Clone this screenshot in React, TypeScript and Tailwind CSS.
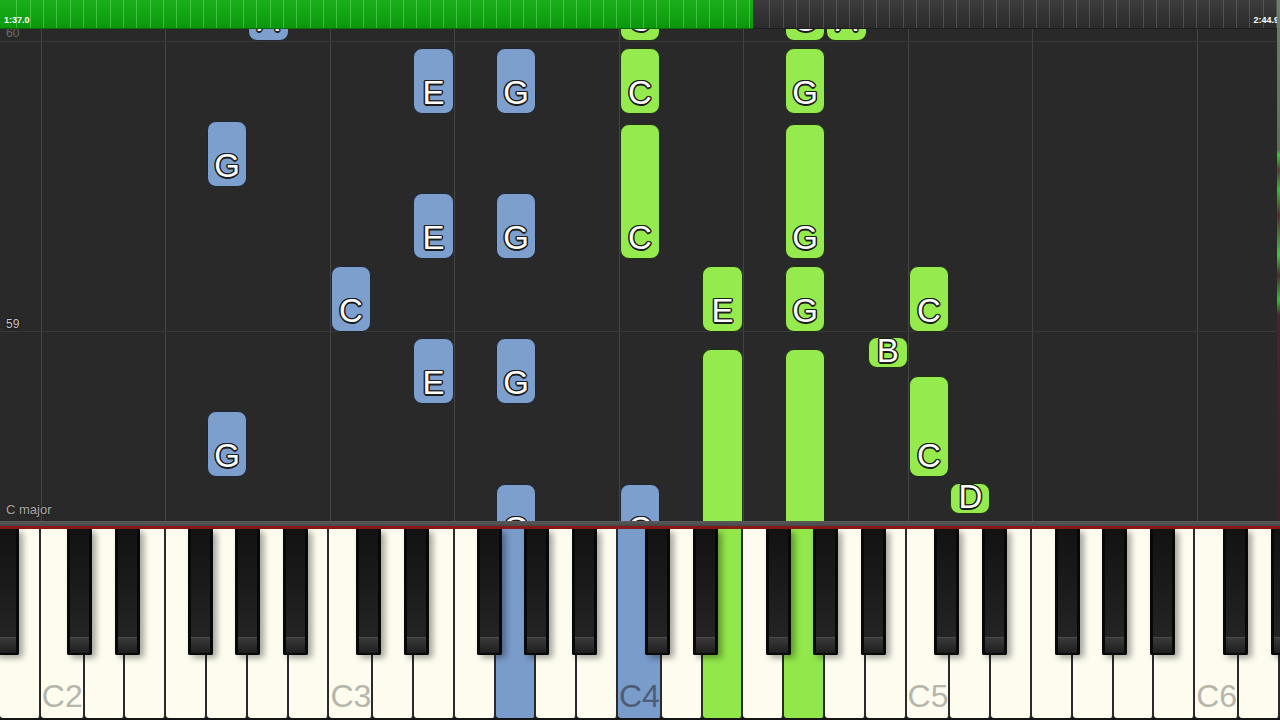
import React from 'react';

const W = 1280 / 31;
const ROLL_TOP = 29;
const NAMES = ['B', 'C', 'D', 'E', 'F', 'G', 'A'];

interface Note {
  i: number;
  top: number;
  bottom: number;
  c: 'b' | 'g';
  pb?: number;
}

// page y coordinates; i = white key index starting at B1
const notes: Note[] = [
  { i: 6, top: -25, bottom: 41, c: 'b' },
  { i: 10, top: 48, bottom: 114, c: 'b' },
  { i: 12, top: 48, bottom: 114, c: 'b' },
  { i: 5, top: 121, bottom: 187, c: 'b' },
  { i: 10, top: 193, bottom: 259, c: 'b' },
  { i: 12, top: 193, bottom: 259, c: 'b' },
  { i: 8, top: 266, bottom: 332, c: 'b' },
  { i: 10, top: 338, bottom: 404, c: 'b' },
  { i: 12, top: 338, bottom: 404, c: 'b' },
  { i: 5, top: 411, bottom: 477, c: 'b' },
  { i: 12, top: 484, bottom: 550, c: 'b' },
  { i: 15, top: 484, bottom: 550, c: 'b' },

  { i: 15, top: -25, bottom: 41, c: 'g' },
  { i: 19, top: -25, bottom: 41, c: 'g' },
  { i: 20, top: -25, bottom: 41, c: 'g' },
  { i: 15, top: 48, bottom: 114, c: 'g' },
  { i: 19, top: 48, bottom: 114, c: 'g' },
  { i: 15, top: 124, bottom: 259, c: 'g' },
  { i: 19, top: 124, bottom: 259, c: 'g' },
  { i: 17, top: 266, bottom: 332, c: 'g' },
  { i: 19, top: 266, bottom: 332, c: 'g' },
  { i: 22, top: 266, bottom: 332, c: 'g' },
  { i: 21, top: 337, bottom: 368, c: 'g', pb: 0 },
  { i: 17, top: 349, bottom: 600, c: 'g' },
  { i: 19, top: 349, bottom: 600, c: 'g' },
  { i: 22, top: 376, bottom: 477, c: 'g' },
  { i: 23, top: 483, bottom: 514, c: 'g', pb: 0 },
];

const gridKeys = [1, 4, 8, 11, 15, 18, 22, 25, 29];

const highlights: Record<number, 'b' | 'g'> = { 12: 'b', 15: 'b', 17: 'g', 19: 'g' };

// black key centers, relative to the C of each octave
const blackOffsets = [W - 3.5, 2 * W + 3.5, 4 * W - 6, 5 * W, 6 * W + 6];
const blackKeys: number[] = [];
for (let o = -1; o < 5; o++) {
  const x0 = W + o * 7 * W;
  blackOffsets.forEach((off) => {
    const cx = x0 + off;
    if (cx > -20 && cx < 1300) blackKeys.push(cx);
  });
}

const outline =
  '[text-shadow:-1.5px_0_#1c1c1c,1.5px_0_#1c1c1c,0_-1.5px_#1c1c1c,0_1.5px_#1c1c1c,-1px_-1px_#1c1c1c,1px_1px_#1c1c1c,-1px_1px_#1c1c1c,1px_-1px_#1c1c1c]';

const NoteBlock: React.FC<{ note: Note }> = ({ note }) => {
  const letter = NAMES[note.i % 7];
  return (
    <div
      className={`absolute flex items-end justify-center rounded-[9px] border-[1.5px] ${
        note.c === 'b' ? 'bg-[#7c9fcd] border-[#1f2632]' : 'bg-[#95ea4d] border-[#223016]'
      }`}
      style={{
        left: note.i * W + 0.5,
        width: W - 1,
        top: note.top - ROLL_TOP,
        height: note.bottom - note.top,
      }}
    >
      <span
        className={`font-['Liberation_Sans',Arial,sans-serif] text-[33px] leading-none text-white ${outline}`}
        style={{ paddingBottom: note.pb ?? 4 }}
      >
        {letter}
      </span>
    </div>
  );
};

const TopBar: React.FC = () => (
  <div className="flex h-[29px] font-['Liberation_Sans',Arial,sans-serif] text-[9px] font-bold leading-none text-white">
    <div className="flex w-[753px] items-end border-b border-[#0a6a0a] bg-[repeating-linear-gradient(90deg,transparent_0,transparent_12.33px,rgba(120,230,120,0.45)_12.33px,rgba(120,230,120,0.45)_13.33px),linear-gradient(180deg,#1cae1c,#13a413,#0b960b)] bg-[position:4px_0,0_0] pb-[3px] pl-[4px]">
      <span>1:37.0</span>
    </div>
    <div className="flex flex-1 items-end justify-end border-b border-[#1c1c1c] bg-[repeating-linear-gradient(90deg,transparent_0,transparent_12.33px,rgba(110,110,110,0.5)_12.33px,rgba(110,110,110,0.5)_13.33px),linear-gradient(180deg,#3c3c3c,#333,#2b2b2b)] bg-[position:4px_0,0_0] pb-[3px] pr-[1px]">
      <span>2:44.9</span>
    </div>
  </div>
);

const Roll: React.FC = () => (
  <div className="relative h-[492px] overflow-hidden bg-[#292929] font-['Liberation_Sans',Arial,sans-serif]">
    {/* key columns with lines at C and F */}
    <div className="absolute inset-0 flex">
      {Array.from({ length: 31 }, (_, i) => (
        <div
          key={i}
          className={`flex-1 ${gridKeys.includes(i) ? 'border-l border-[#444]' : ''}`}
        />
      ))}
    </div>
    {/* measure rows */}
    <div className="absolute inset-0 flex flex-col">
      <div className="flex h-[13px] items-end border-b border-[#383838] px-[6px]">
        <span className="mb-[2px] text-[12px] leading-[12px] text-[#6d6d6d]">60</span>
      </div>
      <div className="flex h-[290px] items-end border-b border-[#383838] px-[6px]">
        <span className="mb-[1px] text-[12px] leading-[12px] text-[#c4c4c4] [text-shadow:0_0_2px_#111,0_0_2px_#111]">
          59
        </span>
      </div>
      <div className="flex flex-1 items-end px-[6px] pb-[5px]">
        <span className="text-[13px] leading-none text-[#a9a9a9] [text-shadow:0_0_2px_#111]">C major</span>
      </div>
    </div>
    {notes.map((n, idx) => (
      <NoteBlock key={idx} note={n} />
    ))}
  </div>
);

const Keyboard: React.FC = () => (
  <div className="relative flex h-[191px] bg-[#151515] pb-[2px] font-['Liberation_Sans',Arial,sans-serif]">
    {Array.from({ length: 31 }, (_, i) => {
      const hl = highlights[i];
      const bg = hl === 'b' ? 'bg-[#7a9cca]' : hl === 'g' ? 'bg-[#92e84b]' : 'bg-[#fdfcef]';
      const isC = i % 7 === 1;
      return (
        <div key={i} className={`flex flex-1 items-end rounded-b-[3px] border-r-2 border-[#2a2a2a] pb-[6px] pl-[1px] ${bg}`}>
          {isC && (
            <span className={`text-[32px] leading-none ${hl ? 'text-[#4d5d75]' : 'text-[#b6b6ad]'}`}>
              C{Math.floor(i / 7) + 2}
            </span>
          )}
        </div>
      );
    })}
    {blackKeys.map((cx, idx) => (
      <div
        key={idx}
        className="absolute top-0 flex h-[126px] w-[25px] flex-col justify-end rounded-b-[2px] border-x-[3px] border-b-2 border-[#080808] bg-gradient-to-b from-[#121212] to-[#262626] shadow-[4px_3px_6px_rgba(0,0,0,0.35)]"
        style={{ left: cx - 12.5 }}
      >
        <div className="h-[16px] border-t border-[#4a4a4a] bg-gradient-to-b from-[#3a3a3a] to-[#1e1e1e]" />
      </div>
    ))}
  </div>
);

export default function App() {
  return (
    <div className="relative flex h-[720px] w-[1280px] flex-col overflow-hidden bg-[#292929]">
      <TopBar />
      <Roll />
      <div className="h-[5px] bg-gradient-to-b from-[#5a5a5a] to-[#474747]" />
      <div className="h-[3px] bg-[#8a1818]" />
      <Keyboard />
      <div className="absolute right-0 top-0 h-[521px] w-[3px] bg-[linear-gradient(180deg,#6f7f6a_0,#5f6f5a_150px,#2fd02f_155px,#5a3a3a_170px,#30c030_190px,#5a2a32_215px,#3aca3a_255px,#4a2a30_275px,#2cc42c_300px,#4a2430_315px,#3e2028_521px)]" />
    </div>
  );
}
